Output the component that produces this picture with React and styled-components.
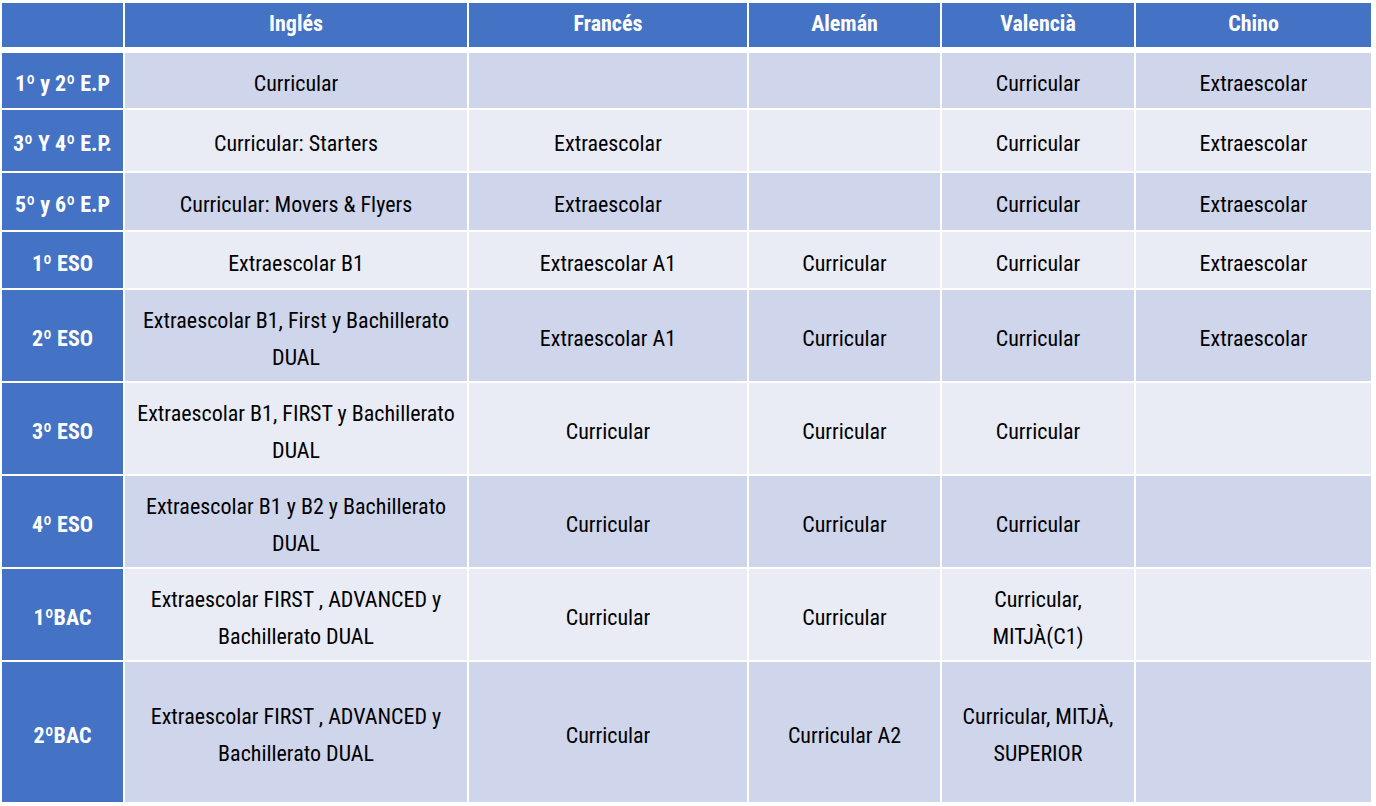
import styled, { createGlobalStyle } from "styled-components";

const GlobalStyle = createGlobalStyle`
  html, body {
    margin: 0;
    padding: 0;
    background: #fff;
  }
  body {
    font-family: "Roboto Condensed", "Liberation Sans Narrow", "DejaVu Sans Condensed", Roboto, sans-serif;
  }
`;

const colors = {
  accent: "#4472c4",
  bandDark: "#cfd5ea",
  bandLight: "#e9ebf5",
  text: "#000",
};

const Grid = styled.div`
  display: grid;
  grid-template-columns: 121px 342px 278px 191px 192px 235px;
  grid-template-rows: 48px 55px 61px 57px 56px 91px 91px 91px 91px 140px;
  column-gap: 2px;
  row-gap: 2px;
  padding: 3px 0 0 2px;
  width: max-content;
`;

const HeadCell = styled.div`
  display: flex;
  align-items: center;
  justify-content: center;
  margin-bottom: 4px;
  padding-bottom: 4px;
  background: ${colors.accent};
  color: #fff;
  font-weight: 700;
  font-size: 22px;
`;

const RowLabel = styled.div`
  display: flex;
  align-items: center;
  justify-content: center;
  padding-top: 6px;
  background: ${colors.accent};
  color: #fff;
  font-weight: 700;
  font-size: 22px;
  white-space: nowrap;
`;

const Cell = styled.div`
  display: flex;
  align-items: center;
  justify-content: center;
  text-align: center;
  padding: 6px 8px 0;
  background: ${(p) => (p.$odd ? colors.bandDark : colors.bandLight)};
  color: ${colors.text};
  font-size: 22px;
  line-height: 37px;
`;

const headers = ["", "Inglés", "Francés", "Alemán", "Valencià", "Chino"];

const rows = [
  ["1º y 2º E.P", "Curricular", "", "", "Curricular", "Extraescolar"],
  ["3º Y 4º E.P.", "Curricular: Starters", "Extraescolar", "", "Curricular", "Extraescolar"],
  ["5º y 6º E.P", "Curricular: Movers & Flyers", "Extraescolar", "", "Curricular", "Extraescolar"],
  ["1º ESO", "Extraescolar B1", "Extraescolar A1", "Curricular", "Curricular", "Extraescolar"],
  ["2º ESO", "Extraescolar B1, First y Bachillerato DUAL", "Extraescolar A1", "Curricular", "Curricular", "Extraescolar"],
  ["3º ESO", "Extraescolar B1, FIRST y Bachillerato DUAL", "Curricular", "Curricular", "Curricular", ""],
  ["4º ESO", "Extraescolar B1 y B2 y Bachillerato DUAL", "Curricular", "Curricular", "Curricular", ""],
  ["1ºBAC", "Extraescolar FIRST , ADVANCED y Bachillerato DUAL", "Curricular", "Curricular", "Curricular, MITJÀ(C1)", ""],
  ["2ºBAC", "Extraescolar FIRST , ADVANCED y Bachillerato DUAL", "Curricular", "Curricular A2", "Curricular, MITJÀ, SUPERIOR", ""],
];

export default function App() {
  return (
    <>
      <GlobalStyle />
      <Grid>
        {headers.map((h, i) => (
          <HeadCell key={"h" + i}>{h}</HeadCell>
        ))}
        {rows.map((row, r) =>
          row.map((val, c) =>
            c === 0 ? (
              <RowLabel key={r + "-" + c}>{val}</RowLabel>
            ) : (
              <Cell key={r + "-" + c} $odd={r % 2 === 0}>
                {val}
              </Cell>
            )
          )
        )}
      </Grid>
    </>
  );
}
